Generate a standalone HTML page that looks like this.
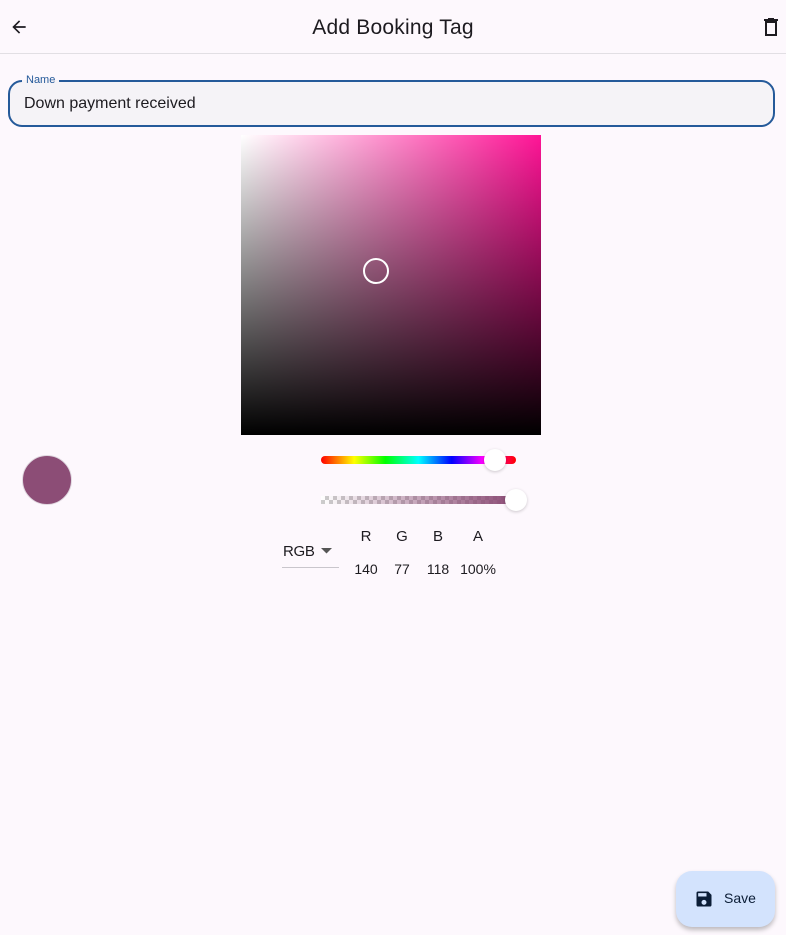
<!DOCTYPE html>
<html><head><meta charset="utf-8"><style>
*{box-sizing:border-box;margin:0;padding:0}
body{width:786px;height:935px;background:#fdf8fd;font-family:"Liberation Sans",sans-serif;color:#1d1b20;position:relative;overflow:hidden}
.hdr{position:absolute;left:0;top:0;width:786px;height:54px;border-bottom:1px solid #e2dfe4}
.title{position:absolute;left:0;right:0;top:16px;text-align:center;font-size:21px;letter-spacing:.2px}
.field{position:absolute;left:8px;top:80px;width:767px;height:47px;border:2px solid #255a9a;border-radius:14px;background:#f5f3f7}
.lbl{position:absolute;left:12px;top:-9px;padding:0 4px;font-size:11px;color:#255a9a;line-height:14px;background:linear-gradient(#fdf8fd 50%,#f5f3f7 50%)}
.val{position:absolute;left:14px;top:13px;font-size:16px}
.sq{position:absolute;left:241px;top:135px;width:300px;height:300px;background:linear-gradient(to top,#000,rgba(0,0,0,0)),linear-gradient(to right,#fff,#ff1496)}
.cur{position:absolute;left:363px;top:258px;width:26px;height:26px;border:2px solid #fff;border-radius:50%}
.sw{position:absolute;left:22px;top:455px;width:50px;height:50px;border-radius:50%;background:#8c4d76;border:1px solid #e0d8e0}
.hue{position:absolute;left:321px;top:456px;width:195px;height:8px;border-radius:4px;background:linear-gradient(to right,#f00,#ff0 17%,#0f0 33%,#0ff 50%,#00f 67%,#f0f 83%,#f00)}
.alp{position:absolute;left:321px;top:496px;width:193px;height:8px;background:linear-gradient(to right,rgba(140,77,118,0),#8c4d76),repeating-conic-gradient(#ccc 0 25%,#fff 0 50%) 0 0/8px 8px}
.th{position:absolute;width:22px;height:22px;border-radius:50%;background:#fff;box-shadow:0 1px 3px rgba(0,0,0,.2)}
.t{position:absolute;font-size:15px;text-align:center;width:40px}
.fab{position:absolute;left:676px;top:871px;width:99px;height:56px;border-radius:16px;background:#d3e3fd;box-shadow:0 3px 5px rgba(0,0,0,.25);font-size:14px;color:#0b1d36}
</style></head><body>
<div class="hdr">
<svg style="position:absolute;left:9px;top:17px" width="20" height="20" viewBox="0 0 24 24"><path d="M20 11H7.8l5.6-5.6L12 4l-8 8 8 8 1.4-1.4L7.8 13H20z" fill="#1d1b20"/></svg>
<div class="title">Add Booking Tag</div>
<svg style="position:absolute;left:759px;top:15px" width="24" height="24" viewBox="0 0 24 24"><path d="M6 6h12v15H6z M8 8v11h8V8z M5 4h14v2H5z M9 3h6v1H9z" fill="#1d1b20" fill-rule="evenodd"/></svg>
</div>
<div class="field"><span class="lbl">Name</span><span class="val">Down payment received</span></div>
<div class="sq"></div><div class="cur"></div>
<div class="sw"></div>
<div class="hue"></div><div class="th" style="left:484px;top:449px"></div>
<div class="alp"></div><div class="th" style="left:505px;top:489px"></div>
<div class="t" style="left:283px;top:543px;width:auto;font-size:15px;letter-spacing:-.3px">RGB</div>
<svg style="position:absolute;left:321px;top:548px" width="12" height="6"><path d="M0 0h11L5.5 5.5z" fill="#555"/></svg>
<div style="position:absolute;left:282px;top:567px;width:57px;height:1px;background:#c9c6cc"></div>
<div class="t" style="left:346px;top:528px">R</div><div class="t" style="left:382px;top:528px">G</div><div class="t" style="left:418px;top:528px">B</div><div class="t" style="left:458px;top:528px">A</div>
<div class="t" style="left:346px;top:561px;font-size:14px">140</div><div class="t" style="left:382px;top:561px;font-size:14px">77</div><div class="t" style="left:418px;top:561px;font-size:14px">118</div><div class="t" style="left:453px;top:561px;font-size:14px;width:50px">100%</div>
<div class="fab">
<svg style="position:absolute;left:18px;top:18px" width="20" height="20" viewBox="0 0 24 24"><path d="M17 3H5a2 2 0 0 0-2 2v14a2 2 0 0 0 2 2h14a2 2 0 0 0 2-2V7zM12 19a3 3 0 1 1 0-6 3 3 0 0 1 0 6zm3-10H5V5h10z" fill="#0b1d36"/></svg>
<span style="position:absolute;left:48px;top:19px">Save</span></div>
</body></html>
